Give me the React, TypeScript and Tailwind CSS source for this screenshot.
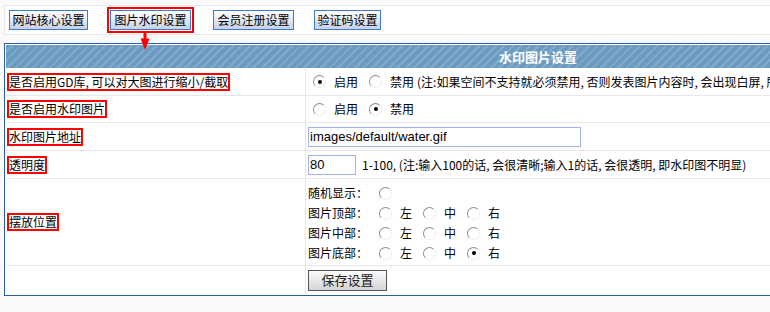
import React from "react";

const tabs = [
  { name: "网站核心设置", w: "w-[79px]", ml: "ml-0" },
  { name: "图片水印设置", w: "w-[81px]", ml: "ml-[19px]", active: true },
  { name: "会员注册设置", w: "w-[81px]", ml: "ml-[19px]" },
  { name: "验证码设置", w: "w-[67px]", ml: "ml-[20px]" },
];

const Radio = ({ checked }: { checked?: boolean }) => (
  <span className="inline-flex items-center justify-center shrink-0 w-[13px] h-[13px] ml-[5px] mr-[3px] rounded-full bg-white border border-t-[#8e8e8e] border-l-[#8e8e8e] border-r-[#ededed] border-b-[#ededed]">
    {checked && <span className="w-[4px] h-[4px] rounded-full bg-black" />}
  </span>
);

const Label = ({ text }: { text: string }) => (
  <span className="inline-block border-2 border-[#ff0000] leading-[14px] whitespace-nowrap">{text}</span>
);

const TabButton = ({ name, w }: { name: string; w: string }) => (
  <div
    className={`${w} h-[20px] flex items-center justify-center border border-[#3b7bc8] bg-gradient-to-b from-white to-[#c6d1e6] leading-[18px]`}
  >
    {name}
  </div>
);

const positions = [
  { name: "图片顶部：", checked: -1 },
  { name: "图片中部：", checked: -1 },
  { name: "图片底部：", checked: 2 },
];

const App = () => {
  return (
    <div className="relative w-[770px] h-[312px] overflow-hidden bg-[#fafafa] text-[12px] text-black font-['Noto_Sans_CJK_SC',sans-serif]">
      <div className="w-[1080px] pl-[4px] pt-[5px]">
        {/* 顶部导航 */}
        <div className="h-[30px] flex items-center pl-[4px] border border-[#e8e8e8] bg-white">
          {tabs.map((t) =>
            t.active ? (
              <div key={t.name} className={`${t.ml} border-2 border-[#ff0000] p-px`}>
                <TabButton name={t.name} w={t.w} />
              </div>
            ) : (
              <div key={t.name} className={t.ml}>
                <TabButton name={t.name} w={t.w} />
              </div>
            )
          )}
        </div>

        {/* 设置表格 */}
        <div className="mt-[8px] w-[1068px] border border-[#2c5ea8] p-px bg-white">
          <div className="h-[23px] flex items-center justify-center text-white font-bold text-[13px] bg-[repeating-linear-gradient(135deg,#6b9bbf_0px,#6b9bbf_4px,#7faccd_4px,#7faccd_6px)]">
            水印图片设置
          </div>

          <div className="grid grid-cols-[300px_1fr]">
            <div className="h-[28px] flex items-center pl-px border-b border-r border-[#e8e8e8]">
              <Label text="是否启用GD库, 可以对大图进行缩小/截取" />
            </div>
            <div className="h-[28px] flex items-center pl-[2px] border-b border-[#e8e8e8] whitespace-nowrap">
              <Radio checked />
              <span className="pl-[5px] pr-[6px]">启用</span>
              <Radio />
              <span className="pl-[5px] pr-[3px]">禁用</span>
              <span>(注:如果空间不支持就必须禁用, 否则发表图片内容时, 会出现白屏, 所以请先测试)</span>
            </div>

            <div className="h-[27px] flex items-center pl-px border-b border-r border-[#e8e8e8]">
              <Label text="是否启用水印图片" />
            </div>
            <div className="h-[27px] flex items-center pl-[2px] border-b border-[#e8e8e8]">
              <Radio />
              <span className="pl-[5px] pr-[6px]">启用</span>
              <Radio checked />
              <span className="pl-[5px]">禁用</span>
            </div>

            <div className="h-[28px] flex items-center pl-px border-b border-r border-[#e8e8e8]">
              <Label text="水印图片地址" />
            </div>
            <div className="h-[28px] flex items-center pl-[2px] border-b border-[#e8e8e8]">
              <div className="w-[273px] h-[20px] flex items-center pl-px border border-[#a3b1ee] font-['Liberation_Sans',sans-serif] text-[13px]">
                images/default/water.gif
              </div>
            </div>

            <div className="h-[28px] flex items-center pl-px border-b border-r border-[#e8e8e8]">
              <Label text="透明度" />
            </div>
            <div className="h-[28px] flex items-center pl-[2px] border-b border-[#e8e8e8] whitespace-nowrap">
              <div className="w-[48px] h-[20px] flex items-center pl-px border border-[#a3b1ee] font-['Liberation_Sans',sans-serif] text-[13px]">
                80
              </div>
              <span className="ml-[6px]">1-100, (注:输入100的话, 会很清晰;输入1的话, 会很透明, 即水印图不明显)</span>
            </div>

            <div className="h-[87px] flex items-center pl-px border-b border-r border-[#e8e8e8]">
              <Label text="摆放位置" />
            </div>
            <div className="h-[87px] pt-[4px] pl-[2px] border-b border-[#e8e8e8] leading-[20px]">
              <div className="h-[20px] flex items-center">
                <span className="w-[60px]">随机显示：</span>
                <span className="ml-[6px] flex items-center">
                  <Radio />
                </span>
              </div>
              {positions.map((p) => (
                <div key={p.name} className="h-[20px] flex items-center">
                  <span className="w-[60px]">{p.name}</span>
                  <span className="ml-[6px] flex items-center">
                    <Radio checked={p.checked === 0} />
                    <span className="pl-[5px] pr-[6px]">左</span>
                    <Radio checked={p.checked === 1} />
                    <span className="pl-[5px] pr-[6px]">中</span>
                    <Radio checked={p.checked === 2} />
                    <span className="pl-[5px]">右</span>
                  </span>
                </div>
              ))}
            </div>

            <div className="h-[28px] border-r border-[#e8e8e8]" />
            <div className="h-[28px] flex items-center pl-[2px]">
              <div className="w-[79px] h-[21px] flex items-center justify-center border border-[#555] bg-gradient-to-b from-[#fdfdfd] to-[#d4d4d4] text-[13px] text-[#222]">
                保存设置
              </div>
            </div>
          </div>
        </div>
      </div>

      {/* 红色指示箭头 */}
      <svg className="absolute left-[139px] top-[33px]" width="12" height="18" viewBox="0 0 12 18">
        <rect x="4.5" y="0" width="3" height="7" fill="#ff0000" />
        <path d="M1.5 5.5 L10.5 5.5 L6 17 Z" fill="#ff0000" />
      </svg>
    </div>
  );
};

export default App;
